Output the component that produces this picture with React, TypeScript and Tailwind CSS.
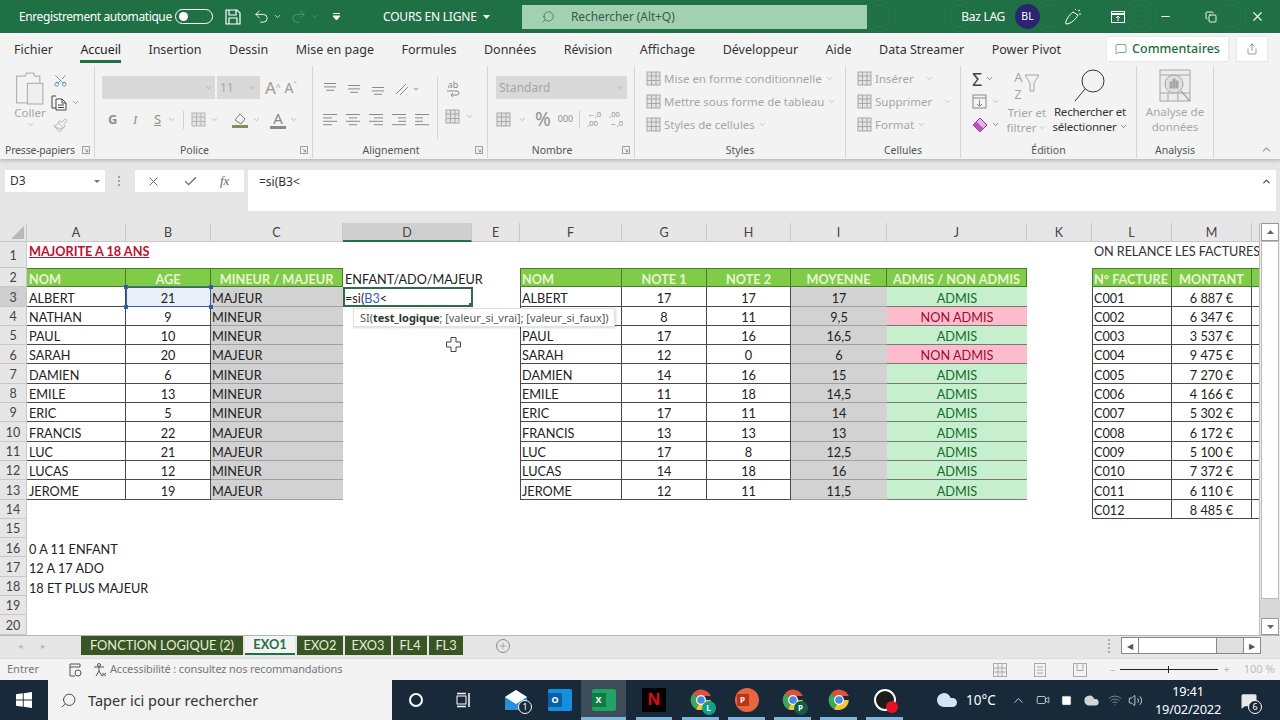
import { ReactNode } from 'react';
import { ChevronDown, ChevronUp, Search, Check, X, MessageSquare, Share, Plus, Minus, Scissors, Paintbrush, Undo2, Redo2, Wifi, Volume2, Cloud, Copy, Square, Video } from 'lucide-react';

const students: [string, number, string][] = [
  ['ALBERT', 21, 'MAJEUR'], ['NATHAN', 9, 'MINEUR'], ['PAUL', 10, 'MINEUR'], ['SARAH', 20, 'MAJEUR'],
  ['DAMIEN', 6, 'MINEUR'], ['EMILE', 13, 'MINEUR'], ['ERIC', 5, 'MINEUR'], ['FRANCIS', 22, 'MAJEUR'],
  ['LUC', 21, 'MAJEUR'], ['LUCAS', 12, 'MINEUR'], ['JEROME', 19, 'MAJEUR'],
];
// F4 sits under the formula tooltip, so its name is left out
const notes: [string, number, number, string, string][] = [
  ['ALBERT', 17, 17, '17', 'ADMIS'], ['', 8, 11, '9,5', 'NON ADMIS'], ['PAUL', 17, 16, '16,5', 'ADMIS'],
  ['SARAH', 12, 0, '6', 'NON ADMIS'], ['DAMIEN', 14, 16, '15', 'ADMIS'], ['EMILE', 11, 18, '14,5', 'ADMIS'],
  ['ERIC', 17, 11, '14', 'ADMIS'], ['FRANCIS', 13, 13, '13', 'ADMIS'], ['LUC', 17, 8, '12,5', 'ADMIS'],
  ['LUCAS', 14, 18, '16', 'ADMIS'], ['JEROME', 12, 11, '11,5', 'ADMIS'],
];
const invoices: [string, string][] = [
  ['C001', '6 887 €'], ['C002', '6 347 €'], ['C003', '3 537 €'], ['C004', '9 475 €'], ['C005', '7 270 €'], ['C006', '4 166 €'],
  ['C007', '5 302 €'], ['C008', '6 172 €'], ['C009', '5 100 €'], ['C010', '7 372 €'], ['C011', '6 110 €'], ['C012', '8 485 €'],
];
const columns = ['A', 'B', 'C', 'D', 'E', 'F', 'G', 'H', 'I', 'J', 'K', 'L', 'M', ''];
const tabs = ['Fichier', 'Accueil', 'Insertion', 'Dessin', 'Mise en page', 'Formules', 'Données', 'Révision', 'Affichage', 'Développeur', 'Aide', 'Data Streamer', 'Power Pivot'];

const ui = "font-['Noto_Sans',sans-serif]";

function Lines({ rows, className = '' }: { rows: [number, number][]; className?: string }) {
  return (
    <svg width="16" height="14" viewBox="0 0 16 14" className={className} stroke="#8a8a8a" strokeWidth="1">
      {rows.map(([a, b], i) => <line key={i} x1={a} x2={b} y1={1.5 + i * 3.4} y2={1.5 + i * 3.4} />)}
    </svg>
  );
}

function Chev({ className = 'text-[#9a9a9a]' }: { className?: string }) {
  return <ChevronDown size={9} strokeWidth={1.5} className={className} />;
}

function TableGlyph({ color = '#a8a8a8' }: { color?: string }) {
  return (
    <svg width="15" height="15" viewBox="0 0 15 15" fill="none" stroke={color} strokeWidth="1">
      <rect x="1" y="1" width="13" height="13" fill="#e4e4e4" />
      <path d="M1 5h13M1 9.500h13M5.500 1v13M10 1v13" />
    </svg>
  );
}

function Group({ label, width, launcher, labelClass = '', children }: { label?: string; width: string; launcher?: boolean; labelClass?: string; children?: ReactNode }) {
  return (
    <div className={`relative flex flex-col my-[1px] border-r border-[#d6d6d6] ${width}`}>
      <div className="flex-1 min-h-0">{children}</div>
      <div className={`h-[18px] pt-[3px] flex items-center justify-center text-[10.500px] text-[#555] ${launcher ? 'pr-[18px]' : ''} ${labelClass}`}>{label}</div>
      {launcher && (
        <svg width="8" height="8" viewBox="0 0 9 9" fill="none" stroke="#8c8c8c" className="absolute right-[4px] bottom-[4px]">
          <path d="M.5 .5h8v8h-8zM3 3l3.500 3.500M6.500 4v2.500H4" />
        </svg>
      )}
    </div>
  );
}

function StyleRow({ label, chevGap = 'ml-[3px]', h = 'h-[23px]' }: { label: string; chevGap?: string; h?: string }) {
  return (
    <div className={`flex items-center gap-[3px] text-[11.500px] text-[#a6a6a6] whitespace-nowrap ${h}`}>
      <TableGlyph />
      <span>{label}</span>
      <Chev className={`text-[#a6a6a6] ${chevGap}`} />
    </div>
  );
}

function Ribbon() {
  return (
    <div className={`flex h-[95px] bg-[#f3f3f3] shadow-[0_2px_3px_rgba(0,0,0,0.18)] relative z-10 ${ui}`}>
      <Group label="Presse-papiers" width="w-[95px]" launcher labelClass="justify-start pl-[5px] pr-0 tracking-[-0.2px]">
        <div className="flex pt-[5px] pl-[14px] gap-[5px]">
          <div className="flex flex-col items-center w-[32px]">
            <svg width="31" height="34" viewBox="0 0 30 33" fill="none" stroke="#b5b5b5" strokeWidth="1.200">
              <path d="M5 5h5l1-3h7l1 3h5v7M5 5H1.500v26H12" />
              <rect x="12" y="12" width="15" height="20" fill="#efefef" />
            </svg>
            <span className="text-[11.500px] text-[#a6a6a6] leading-[14px] mt-[1px]">Coller</span>
            <Chev />
          </div>
          <div className="flex flex-col gap-[6px] pt-[2px]">
            <Scissors size={15} strokeWidth={1.200} className="text-[#4f7aa8] rotate-[-90deg] ml-[2px]" />
            <div className="flex items-center gap-[4px]">
              <svg width="16" height="17" viewBox="0 0 16 17" fill="none" stroke="#444">
                <path d="M5 2H1v12h4" /><path d="M5 5h6l4 4v7H5z" fill="#fafafa" /><path d="M11 5v4h4M7 11h6M7 13.500h6" />
              </svg>
              <Chev className="text-[#555]" />
            </div>
            <Paintbrush size={15} strokeWidth={1.100} className="text-[#9a9a9a] ml-[2px] mt-[1px]" />
          </div>
        </div>
      </Group>
      <Group label="Police" width="w-[218px]" launcher>
        <div className="flex items-center pt-[10px] pl-[7px]">
          <div className="w-[113px] h-[23px] bg-[#d9d9d9] flex items-center justify-end pr-[2px]"><Chev /></div>
          <div className="w-[43px] h-[23px] ml-[2px] bg-[#d9d9d9] flex items-center justify-between px-[3px] text-[12px] text-[#a6a6a6]">11<Chev /></div>
          <span className="ml-[5px] text-[17px] text-[#9a9a9a] leading-none">A<sup className="text-[8px]">^</sup></span>
          <span className="ml-[4px] text-[14px] text-[#9a9a9a] leading-none">A<sup className="text-[8px]">ˇ</sup></span>
        </div>
        <div className="flex items-center pt-[10px] pl-[13px] text-[#8f8f8f] h-[31px]">
          <span className="text-[13px] font-bold w-[25px]">G</span>
          <span className="text-[13px] italic font-['Liberation_Serif',serif] w-[21px]">I</span>
          <span className="text-[13px] underline w-[13px]">S</span>
          <Chev />
          <span className="w-px h-[18px] bg-[#d0d0d0] mx-[7px]" />
          <TableGlyph color="#b5b5b5" />
          <Chev className="text-[#9a9a9a] ml-[4px]" />
          <svg width="18" height="18" viewBox="0 0 18 18" className="ml-[12px]" fill="none" stroke="#7a7a7a">
            <path d="M4 9l5-6 5 5-4 5z" /><rect x="1" y="14" width="16" height="3" fill="#8a8a5a" stroke="none" />
          </svg>
          <Chev className="text-[#9a9a9a] ml-[3px]" />
          <div className="ml-[9px] flex flex-col items-center leading-none text-[15px] text-[#8a8a8a]">A<span className="w-[16px] h-[3px] bg-[#8a8a8a]" /></div>
          <Chev className="text-[#9a9a9a] ml-[3px]" />
        </div>
      </Group>
      <Group label="Alignement" width="w-[175px]" launcher>
        <div className="flex pt-[12px] pl-[9px]">
          <div className="flex flex-col gap-[13px]">
            <div className="flex items-center gap-[8px]">
              <Lines rows={[[2, 14], [2, 14], [4, 12]]} />
              <Lines className="mt-[4px]" rows={[[2, 14], [2, 14], [4, 12]]} />
              <Lines className="mt-[8px]" rows={[[2, 14], [2, 14], [4, 12]]} />
              <svg width="24" height="14" viewBox="0 0 24 14" fill="none" stroke="#8a8a8a"><path d="M2 12L12 2M6 13l8-8" /><path d="M20 6l2 2 2-2" /></svg>
            </div>
            <div className="flex items-center gap-[7px]">
              <Lines rows={[[1, 15], [1, 10], [1, 15], [1, 10]]} />
              <Lines rows={[[1, 15], [4, 12], [1, 15], [4, 12]]} />
              <Lines rows={[[1, 15], [6, 15], [1, 15], [6, 15]]} />
              <Lines rows={[[1, 15], [7, 15], [7, 15], [1, 15]]} />
              <Lines rows={[[1, 15], [1, 9], [1, 9], [1, 15]]} />
            </div>
          </div>
          <div className="ml-[7px] pl-[7px] border-l border-[#d6d6d6] h-[62px] flex flex-col gap-[10px] -mt-[1px] text-[#8a8a8a]">
            <div className="text-[9px] leading-[11px] w-[16px] text-center mt-[2px]">
              <div>ab</div>
              <svg width="14" height="9" viewBox="0 0 14 9" fill="none" stroke="#8a8a8a" className="mx-auto"><path d="M1 1h10q2 0 2 2t-2 2H5M7 3L5 5l2 2" /></svg>
            </div>
            <div className="flex items-center gap-[5px]"><TableGlyph /><Chev /></div>
          </div>
        </div>
      </Group>
      <Group label="Nombre" width="w-[147px]" launcher>
        <div className="pt-[10px] pl-[8px]">
          <div className="w-[131px] h-[23px] bg-[#d9d9d9] flex items-center justify-between px-[3px] text-[12px] text-[#a6a6a6]">Standard<Chev /></div>
          <div className="flex items-center mt-[8px] text-[#8f8f8f] h-[24px]">
            <TableGlyph />
            <Chev className="text-[#9a9a9a] ml-[7px]" />
            <span className="ml-[8px] text-[19px] leading-none">%</span>
            <span className="ml-[7px] text-[9px]">000</span>
            <span className="w-px h-[18px] bg-[#d0d0d0] ml-[6px] mr-[7px]" />
            <span className="text-[7.500px] leading-[9px] w-[15px]">←,0<br />,00</span>
            <span className="text-[7.500px] leading-[9px] w-[15px] ml-[7px]">,00<br />→,0</span>
          </div>
        </div>
      </Group>
      <Group label="Styles" width="w-[211px]">
        <div className="pt-[1px] pl-[11px]">
          <StyleRow label="Mise en forme conditionnelle" chevGap="" />
          <StyleRow label="Mettre sous forme de tableau" chevGap="" />
          <StyleRow label="Styles de cellules" chevGap="" />
        </div>
      </Group>
      <Group label="Cellules" width="w-[115px]">
        <div className="pt-[1px] pl-[11px]">
          <StyleRow label="Insérer" chevGap="ml-[8px]" />
          <StyleRow label="Supprimer" chevGap="ml-[8px]" />
          <StyleRow label="Format" chevGap="" />
        </div>
      </Group>
      <Group label="Édition" width="w-[176px]">
        <div className="flex pt-[1px] pl-[11px]">
          <div className="w-[34px] flex flex-col">
            <div className="h-[23px] flex items-center gap-[3px] text-[#444]"><span className="text-[18px] leading-none">Σ</span><Chev className="text-[#444]" /></div>
            <div className="h-[23px] flex items-center gap-[4px]">
              <svg width="15" height="15" viewBox="0 0 15 15" fill="none" stroke="#8a8a8a"><rect x="1" y="1" width="13" height="13" /><path d="M1 4h13M7.500 6v6M5 10l2.500 2.500L10 10" /></svg>
              <Chev />
            </div>
            <div className="h-[23px] flex items-center gap-[3px]">
              <svg width="16" height="16" viewBox="0 0 16 16"><path d="M8 1l7 7-7 7-7-7z" fill="#e6b3e6" stroke="#8a3a8a" /><path d="M1 8l3.500-3.500 7 7L8 15z" fill="#c04fc0" /></svg>
              <Chev className="text-[#444]" />
            </div>
          </div>
          <div className="w-[42px] flex flex-col items-center text-[11.500px] leading-[15px] text-[#a6a6a6]">
            <div className="h-[36px] mt-[1px] flex items-center gap-[1px]">
              <div className="flex flex-col text-[13px] leading-[17px]"><span>A</span><span>Z</span></div>
              <svg width="16" height="18" viewBox="0 0 16 18" fill="none" stroke="#a6a6a6" className="mb-[6px]"><path d="M1 1h14l-5 8v8H6V9z" /></svg>
            </div>
            <span className="mt-[1px]">Trier et</span>
            <span className="flex items-center gap-[2px]">filtrer<Chev className="text-[#a6a6a6]" /></span>
          </div>
          <div className="w-[80px] ml-[2px] flex flex-col items-center text-[11.500px] leading-[15px] text-[#333] whitespace-nowrap tracking-[-0.2px]">
            <svg width="34" height="36" viewBox="0 0 34 36" fill="none" stroke="#333" strokeWidth="1">
              <circle cx="20" cy="14" r="11" /><path d="M12 22L2 34" />
            </svg>
            <span className="mt-[1px]">Rechercher et</span>
            <span className="flex items-center gap-[2px]">sélectionner<Chev className="text-[#333]" /></span>
          </div>
        </div>
      </Group>
      <Group label="Analysis" width="w-[77px]">
        <div className="flex flex-col items-center pt-[3px] text-[11.500px] leading-[15px] text-[#a6a6a6]">
          <svg width="32" height="34" viewBox="0 0 32 34" fill="none" stroke="#a6a6a6">
            <rect x="1" y="1" width="30" height="31" fill="#ececec" /><path d="M1 6h30M1 24h30M9 24v8M19 24v8" />
            <circle cx="15" cy="15" r="9" fill="#e0e0e0" /><path d="M22 22l9 10" strokeWidth="1.500" /><rect x="11" y="13" width="2" height="6" fill="#a6a6a6" /><rect x="14" y="10" width="2" height="9" fill="#a6a6a6" /><rect x="17" y="12" width="2" height="7" fill="#a6a6a6" />
          </svg>
          <span className="mt-[1px]">Analyse de</span>
          <span>données</span>
        </div>
      </Group>
      <div className="flex-1 flex items-end justify-end pb-[3px] pr-[7px]">
        <ChevronUp size={13} strokeWidth={1.500} className="text-[#444]" />
      </div>
    </div>
  );
}

function TitleBar() {
  return (
    <div className={`relative h-[33px] bg-[#1f7145] text-white flex items-center shrink-0 overflow-hidden ${ui}`}>
      <svg width="420" height="33" viewBox="0 0 420 33" fill="none" stroke="#26784b" strokeWidth="1" className="absolute right-[10px] top-0">
        {[30, 110, 200, 290, 380].map(x => (
          <g key={x}>
            <circle cx={x} cy="16" r="6" /><circle cx={x} cy="16" r="11" /><circle cx={x} cy="16" r="16" />
          </g>
        ))}
      </svg>
      <span className="relative ml-[19px] w-[153px] text-[12px] whitespace-nowrap tracking-[-0.4px]">Enregistrement automatique</span>
      <div className="relative ml-[3px] w-[38px] h-[15px] rounded-full border border-white flex items-center pl-[3px]">
        <span className="w-[9px] h-[9px] rounded-full bg-white" />
      </div>
      <svg width="16" height="16" viewBox="0 0 16 16" fill="none" stroke="#fff" strokeWidth="1.200" className="relative ml-[12px]">
        <path d="M1 1h11l3 3v11H1zM4 1v5h7V1M4 15V9h8v6" />
      </svg>
      <Undo2 size={17} strokeWidth={1.300} className="relative ml-[12px]" />
      <ChevronDown size={9} className="relative ml-[3px]" />
      <Redo2 size={17} strokeWidth={1.300} className="relative ml-[8px] text-[#4f9a70]" />
      <ChevronDown size={9} className="relative ml-[3px] text-[#4f9a70]" />
      <svg width="9" height="10" viewBox="0 0 9 10" fill="none" stroke="#fff" className="relative ml-[13px]"><path d="M1 1.500h7" /><path d="M1 4l3.500 4L8 4z" fill="#fff" /></svg>
      <span className="relative ml-[42px] text-[12px] whitespace-nowrap tracking-[-0.2px]">COURS EN LIGNE</span>
      <svg width="7" height="4" viewBox="0 0 7 4" className="relative ml-[6px]"><path d="M0 0h7L3.500 4z" fill="#fff" /></svg>
      <div className="absolute left-[522px] top-[5px] w-[345px] h-[24px] bg-[#a2d1b2] flex items-center text-[#3d5a48] text-[12px]">
        <Search size={14} strokeWidth={1.200} className="ml-[19px] -scale-x-100" />
        <span className="ml-[16px] tracking-[-0.1px]">Rechercher (Alt+Q)</span>
      </div>
      <div className="ml-auto flex items-center">
        <span className="relative text-[12px] whitespace-nowrap tracking-[-0.3px]">Baz LAG</span>
        <div className="relative ml-[10px] w-[25px] h-[25px] rounded-full bg-[#2b2470] flex items-center justify-center text-[10.500px]">BL</div>
        <svg width="18" height="18" viewBox="0 0 18 18" fill="none" stroke="#fff" className="relative ml-[24px]"><path d="M2 16c-1-3 3-9 7-12l5 3c-2 4-7 9-12 9zM11 2l1-1M14 3l2-1M15 6h2" /></svg>
        <svg width="14" height="12" viewBox="0 0 14 12" fill="none" stroke="#fff" className="relative ml-[29px]"><rect x=".5" y=".5" width="13" height="11" /><path d="M.5 3h13" strokeWidth="2" /><path d="M7 10V5M5 7l2-2 2 2" /></svg>
        <Minus size={13} strokeWidth={1.800} className="relative ml-[34px]" />
        <Copy size={12} strokeWidth={1.800} className="relative ml-[33px]" />
        <X size={15} strokeWidth={1.800} className="relative ml-[33px] mr-[15px]" />
      </div>
    </div>
  );
}

function TabBar() {
  return (
    <div className={`h-[32px] bg-[#f3f3f3] flex items-center shrink-0 text-[12.500px] text-[#333] ${ui}`}>
      <div className="flex items-center gap-[27.500px] ml-[14px] w-[1093px] pt-[2px]">
        {tabs.map(t => (
          <span key={t} className={`relative whitespace-nowrap ${t === 'Accueil' ? 'text-[#222] tracking-[-0.1px]' : ''}`}>
            {t}
            {t === 'Accueil' && <span className="absolute left-0 right-0 -bottom-[4px] h-[3px] bg-[#1f7145]" />}
          </span>
        ))}
      </div>
      <div className="w-[121px] h-[24px] bg-white flex items-center justify-center gap-[5px] text-[#1f6b44] font-medium shadow-[0_0_2px_rgba(0,0,0,0.12)]">
        <MessageSquare size={12} strokeWidth={1.200} />Commentaires
      </div>
      <div className="ml-[9px] w-[30px] h-[24px] bg-white flex items-center justify-center text-[#1f7145] shadow-[0_0_2px_rgba(0,0,0,0.12)]">
        <Share size={12} strokeWidth={1.200} />
      </div>
    </div>
  );
}

function FormulaZone() {
  return (
    <div className={`h-[64px] bg-[#e6e6e6] flex items-start pt-[11px] pl-[5px] shrink-0 ${ui}`}>
      <div className="w-[100px] h-[22px] bg-white flex items-center justify-between pl-[5px] pr-[5px] text-[12px] text-[#333]">
        D3
        <svg width="6" height="3" viewBox="0 0 6 3"><path d="M0 0h6L3 3z" fill="#777" /></svg>
      </div>
      <div className="w-[3px] h-[10px] ml-[13px] mt-[6px] border-l-2 border-dotted border-[#a0a0a0]" />
      <div className="ml-[14px] w-[109px] h-[22px] bg-white flex items-center pl-[11px] text-[#666]">
        <X size={15} strokeWidth={1.500} />
        <Check size={15} strokeWidth={2} className="ml-[22px]" />
        <span className="ml-[22px] text-[13px] italic font-['Liberation_Serif',serif]">fx</span>
      </div>
      <div className="ml-[4px] w-[1028px] h-[41px] bg-white pl-[11px] pr-[4px] pt-[3px] text-[12px] text-[#333] flex items-start justify-between">
        =si(B3&lt;
        <ChevronUp size={11} strokeWidth={2.500} className="text-[#444] mt-[3px]" />
      </div>
    </div>
  );
}

const bd = 'border-r border-b border-[#4a4a4a]';
const bdL = 'border-l border-r border-b border-[#4a4a4a]';
const grayCell = 'bg-[#d2d2d2] border-b border-[#a0a0a0]';
const greenHead = 'bg-[#80cc48] text-[#e8f5d6] font-bold border-t border-r border-b border-[#4a7a30]';

function Cell({ className = '', children }: { className?: string; children?: ReactNode }) {
  return <div className={`min-w-0 whitespace-nowrap flex items-center pt-[3px] ${className}`}>{children}</div>;
}

function RowHead({ n, active }: { n: number; active?: boolean }) {
  return (
    <div className={`flex items-center justify-center pt-[3px] border-b border-r border-[#c8c8c8] text-[12.500px] leading-none text-[#444] ${active ? 'bg-[#cfcfcf]' : 'bg-[#e6e6e6]'}`}>{n}</div>
  );
}

function Sheet() {
  const rowCells = (r: number) => {
    const s = students[r - 3];
    const n = notes[r - 3];
    const inv = invoices[r - 3];
    const hasS = r >= 3 && r <= 13;
    return (
      <>
        {hasS ? (
          <>
            <Cell className={`${bd} pl-[2px]`}>{s[0]}</Cell>
            <Cell className={`${bd} justify-center ${r === 3 ? 'bg-[#e8eff9]' : ''}`}>{s[1]}</Cell>
            <Cell className={`${grayCell} pl-[1px]`}>{s[2]}</Cell>
          </>
        ) : (
          <>
            <Cell className="pl-[2px] overflow-visible">
              {r === 16 && '0 A 11 ENFANT'}
              {r === 17 && '12 A 17 ADO'}
              {r === 18 && '18 ET PLUS MAJEUR'}
            </Cell>
            <Cell />
            <Cell />
          </>
        )}
        <Cell className="pl-[2px]">{r === 3 && <span>=si(<span className="text-[#2f5fa8]">B3</span>&lt;</span>}</Cell>
        <Cell />
        {hasS ? (
          <>
            <Cell className={`${bdL} pl-[1px]`}>{n[0]}</Cell>
            <Cell className={`${bd} justify-center`}>{n[1]}</Cell>
            <Cell className={`${bd} justify-center`}>{n[2]}</Cell>
            <Cell className={`${grayCell} justify-center`}>{n[3]}</Cell>
            <Cell className={`border-b border-[#777] justify-center ${n[4] === 'ADMIS' ? 'bg-[#c6efce] text-[#146b2a]' : 'bg-[#fcbccb] text-[#9c0a36]'}`}>{n[4]}</Cell>
          </>
        ) : (
          <><Cell /><Cell /><Cell /><Cell /><Cell /></>
        )}
        <Cell />
        {inv ? (
          <>
            <Cell className={`${bdL} pl-[1px]`}>{inv[0]}</Cell>
            <Cell className={`${bd} justify-center`}>{inv[1]}</Cell>
            <Cell className={bd} />
          </>
        ) : (
          <><Cell /><Cell /><Cell /></>
        )}
      </>
    );
  };

  return (
    <div className="relative flex h-[412px] shrink-0 bg-white overflow-hidden">
      <div className="relative w-[1260px] overflow-hidden border-r border-[#bdbdbd] grid grid-cols-[27px_99px_85px_132px_129px_48px_102px_85px_84px_96px_140px_65px_80px_80px_8px] grid-rows-[19px_26px_repeat(19,19.300px)] text-[12.700px] leading-none text-[#222] font-['Lato',sans-serif]">
        {/* column headers */}
        <div className="bg-[#e6e6e6] border-b border-r border-[#c8c8c8] flex items-end justify-end p-[2px]">
          <svg width="13" height="13" viewBox="0 0 13 13"><path d="M13 0v13H0z" fill="#b8b8b8" /></svg>
        </div>
        {columns.map((c, i) => (
          <div key={i} className={`flex items-center justify-center pt-[3px] text-[12.500px] leading-none text-[#444] border-r border-[#c8c8c8] ${c === 'D' ? 'bg-[#cfcfcf] border-b-2 border-b-[#217346]' : 'bg-[#e6e6e6] border-b border-b-[#c8c8c8]'}`}>{c}</div>
        ))}

        {/* row 1 */}
        <RowHead n={1} />
        <Cell className="pl-[2px] pb-[10px] font-bold text-[#c00f2f] underline">MAJORITE A 18 ANS</Cell>
        <Cell /><Cell /><Cell /><Cell /><Cell /><Cell /><Cell /><Cell /><Cell /><Cell />
        <Cell className="pl-[2px] pb-[10px] text-[#333] tracking-[-0.1px]">ON RELANCE LES FACTURES</Cell>
        <Cell /><Cell />

        {/* row 2 */}
        <RowHead n={2} />
        <Cell className={`${greenHead} pl-[2px]`}>NOM</Cell>
        <Cell className={`${greenHead} justify-center`}>AGE</Cell>
        <Cell className={`${greenHead} justify-center`}>MINEUR / MAJEUR</Cell>
        <Cell className="pl-[2px]">ENFANT/ADO/MAJEUR</Cell>
        <Cell />
        <Cell className={`${greenHead} pl-[1px] border-l`}>NOM</Cell>
        <Cell className={`${greenHead} justify-center`}>NOTE 1</Cell>
        <Cell className={`${greenHead} justify-center`}>NOTE 2</Cell>
        <Cell className={`${greenHead} justify-center`}>MOYENNE</Cell>
        <Cell className={`${greenHead} justify-center`}>ADMIS / NON ADMIS</Cell>
        <Cell />
        <Cell className={`${greenHead} pl-[1px] border-l`}>N° FACTURE</Cell>
        <Cell className={`${greenHead} justify-center`}>MONTANT</Cell>
        <Cell className={greenHead} />

        {Array.from({ length: 18 }, (_, i) => i + 3).map(r => (
          <div key={r} className="contents">
            <RowHead n={r} active={r === 3} />
            {rowCells(r)}
          </div>
        ))}

        {/* selected cell and its reference, over the grid */}
        <div className="absolute left-[343px] top-[64px] w-[130px] h-[20px] border-2 border-[#2e6b46]">
          <span className="absolute -right-[2px] -bottom-[2px] w-[4px] h-[4px] bg-[#2e6b46]" />
        </div>
        <div className="absolute left-[126px] top-[64px] w-[85px] h-[20px] border-[1.500px] border-[#2f5fa8]">
          <span className="absolute -left-[3px] -top-[3px] w-[4px] h-[4px] bg-[#2f5fa8]" />
          <span className="absolute -right-[3px] -top-[3px] w-[4px] h-[4px] bg-[#2f5fa8]" />
          <span className="absolute -left-[3px] -bottom-[3px] w-[4px] h-[4px] bg-[#2f5fa8]" />
          <span className="absolute -right-[3px] -bottom-[3px] w-[4px] h-[4px] bg-[#2f5fa8]" />
        </div>
        <div className="absolute left-[353px] top-[85px] w-[262px] h-[19px] bg-white border border-[#e0e0e0] shadow-[1px_1px_2px_rgba(0,0,0,0.15)] flex items-center pl-[6px] text-[11px] text-[#555] font-['Noto_Sans',sans-serif] whitespace-nowrap tracking-[-0.05px]">
          SI(<b className="text-[#333]">test_logique</b>; [valeur_si_vrai]; [valeur_si_faux])
        </div>
        <svg width="15" height="15" viewBox="0 0 15 15" className="absolute left-[446px] top-[114px]" fill="#fff" stroke="#444" strokeWidth="1">
          <path d="M5 .5h5v4.500h4.500v5H10v4.500H5V10H.5V5H5z" />
        </svg>
      </div>
      <div className="w-[20px] flex flex-col bg-[#ededed]">
        <div className="h-[18px] mx-[1px] bg-white border border-[#999] flex items-center justify-center">
          <svg width="7" height="4" viewBox="0 0 7 4"><path d="M0 4h7L3.500 0z" fill="#666" /></svg>
        </div>
        <div className="h-[358px] mx-[1px] bg-white border border-[#bbb]" />
        <div className="flex-1 bg-[#d8d8d8]" />
        <div className="h-[17px] mx-[1px] bg-white border border-[#999] flex items-center justify-center">
          <svg width="7" height="4" viewBox="0 0 7 4"><path d="M0 0h7L3.500 4z" fill="#666" /></svg>
        </div>
      </div>
    </div>
  );
}

const sheetTabs: [string, string][] = [
  ['FONCTION LOGIQUE (2)', 'w-[162px]'], ['EXO1', 'w-[50px]'], ['EXO2', 'w-[46px]'], ['EXO3', 'w-[46px]'], ['FL4', 'w-[34px]'], ['FL3', 'w-[34px]'],
];

function SheetTabs() {
  return (
    <div className="h-[23px] bg-[#e6e6e6] border-t border-[#b5b5b5] pb-[3px] flex items-center shrink-0 font-['Lato',sans-serif] text-[12.800px]">
      <span className="ml-[18px] text-[#bdbdbd] text-[9px]">◂</span>
      <span className="ml-[18px] text-[#bdbdbd] text-[9px]">▸</span>
      <div className="ml-[35px] flex items-center gap-[2px] w-[404px]">
        {sheetTabs.map(([t, w]) => (
          <div key={t} className={`${w} h-[19px] flex items-center justify-center ${t === 'EXO1' ? 'bg-[#f3f3f3] text-[#1f7145] font-bold border-b-2 border-[#1f7145]' : 'bg-[#375623] text-[#e4ecd8]'}`}>{t}</div>
        ))}
      </div>
      <div className="ml-[11px] w-[14px] h-[14px] rounded-full border border-[#888] flex items-center justify-center text-[#777]"><Plus size={10} strokeWidth={1.200} /></div>
      <div className="ml-[598px] w-[2px] h-[14px] border-l-2 border-dotted border-[#aaa]" />
      <div className="ml-[11px] w-[140px] h-[17px] border border-[#888] flex bg-[#e0e0e0]">
        <div className="w-[17px] bg-white border-r border-[#888] flex items-center justify-center text-[8px] text-[#555]">◀</div>
        <div className="w-[78px] bg-white border-r border-[#888]" />
        <div className="flex-1" />
        <div className="w-[17px] bg-white border-l border-[#888] flex items-center justify-center text-[8px] text-[#555]">▶</div>
      </div>
    </div>
  );
}

function StatusBar() {
  return (
    <div className={`h-[22px] bg-[#f3f3f3] border-t border-[#dcdcdc] flex items-center shrink-0 text-[11px] text-[#777] ${ui}`}>
      <span className="ml-[7px]">Entrer</span>
      <svg width="14" height="14" viewBox="0 0 14 14" fill="none" stroke="#555" className="ml-[29px]"><path d="M2 1h10v3H2zM2 4v9h5" /><circle cx="10" cy="10" r="3" /></svg>
      <svg width="14" height="14" viewBox="0 0 14 14" fill="none" stroke="#555" className="ml-[11px]"><circle cx="6" cy="2" r="1.500" /><path d="M1 4h10M6 4v4l-3 5M6 8l3 5" /><path d="M9 10l4 3M13 10l-4 3" /></svg>
      <span className="ml-[3px] tracking-[-0.15px] w-[270px] whitespace-nowrap">Accessibilité : consultez nos recommandations</span>
      <div className="ml-[613px] flex items-center gap-[26px]">
        <svg width="14" height="14" viewBox="0 0 14 14" fill="none" stroke="#a8a8a8"><rect x=".5" y=".5" width="13" height="13" /><path d="M.5 5h13M.5 9h13M5 .5v13M9 .5v13" /></svg>
        <svg width="14" height="14" viewBox="0 0 14 14" fill="none" stroke="#a8a8a8"><rect x="1.500" y=".5" width="11" height="13" /><path d="M4 4h6M4 7h6M4 10h6" /></svg>
        <svg width="14" height="14" viewBox="0 0 14 14" fill="none" stroke="#a8a8a8"><rect x=".5" y=".5" width="13" height="13" /><path d="M4 .5v7h6v-7" /></svg>
      </div>
      <span className="ml-[23px] text-[#bbb]">–</span>
      <div className="relative ml-[5px] w-[98px] h-px bg-[#222]">
        <span className="absolute left-[48px] -top-[3px] w-px h-[7px] bg-[#222]" />
      </div>
      <span className="ml-[5px] text-[#bbb]">+</span>
      <span className="ml-[14px] text-[#bbb] whitespace-nowrap">100 %</span>
    </div>
  );
}

function ChromeIcon({ badge, badgeColor }: { badge?: string; badgeColor?: string }) {
  return (
    <div className="relative w-[22px] h-[22px]">
      <svg width="22" height="22" viewBox="0 0 22 22">
        <path d="M11 11L3 4.500A10.500 10.500 0 0 1 20.800 7H11z" fill="#e0503f" />
        <path d="M11 11l-5 9.200A10.500 10.500 0 0 1 3 4.500z" fill="#3fa75a" />
        <path d="M11 11h9.800A10.500 10.500 0 0 1 6 20.200z" fill="#f2c53d" />
        <circle cx="11" cy="11" r="5" fill="#fff" /><circle cx="11" cy="11" r="3.800" fill="#4a89e0" />
      </svg>
      {badge && (
        <span className={`absolute -right-[4px] -bottom-[4px] w-[14px] h-[14px] rounded-full flex items-center justify-center text-[8px] font-bold text-white ${badgeColor}`}>{badge}</span>
      )}
    </div>
  );
}

function Slot({ w, open, active, children }: { w: string; open?: boolean; active?: boolean; children?: ReactNode }) {
  return (
    <div className={`relative h-[40px] flex items-center justify-center ${w} ${active ? 'bg-[#3c4c58]' : ''}`}>
      {children}
      {open && <span className="absolute left-0 right-0 bottom-0 h-[3px] bg-[#7fb4dc]" />}
    </div>
  );
}

function Taskbar() {
  return (
    <div className={`h-[40px] bg-[#18293a] flex items-center shrink-0 text-white ${ui}`}>
      <div className="w-[48px] h-[40px] flex items-center justify-center">
        <svg width="16" height="16" viewBox="0 0 16 16" fill="#fff"><path d="M0 2.300l6.800-1v6.300H0zM7.700 1.200L16 0v7.600H7.700zM0 8.400h6.800v6.400L0 13.800zM7.700 8.400H16V16l-8.300-1.200z" /></svg>
      </div>
      <div className="w-[344px] h-[40px] bg-[#f2f2f2] flex items-center text-[#333]">
        <Search size={17} strokeWidth={1.200} className="ml-[12px] -scale-x-100" />
        <span className="ml-[11px] pt-[2px] text-[14.500px]">Taper ici pour rechercher</span>
      </div>
      <Slot w="w-[48px]"><span className="w-[14px] h-[14px] rounded-full border-2 border-white" /></Slot>
      <Slot w="w-[46px]">
        <svg width="16" height="16" viewBox="0 0 16 16" fill="none" stroke="#fff"><rect x="2" y="4" width="9" height="8" /><path d="M2 1.500h9M2 14.500h9M14 1v14" strokeWidth="1.500" /></svg>
      </Slot>
      <div className="w-[7px]" />
      <Slot w="w-[46px]">
        <div className="relative">
          <svg width="24" height="22" viewBox="0 0 24 22"><path d="M1 8l11-7 11 7v13H1z" fill="#2a8fd8" /><path d="M1 8l11 7 11-7-11-7z" fill="#fff" /></svg>
          <span className="absolute -right-[4px] -bottom-[3px] w-[14px] h-[14px] rounded-full bg-[#18293a] border border-white flex items-center justify-center text-[9px]">1</span>
        </div>
      </Slot>
      <Slot w="w-[42px]">
        <div className="relative w-[24px] h-[22px] bg-[#1490df] rounded-[2px]">
          <span className="absolute left-0 top-[4px] w-[14px] h-[14px] bg-[#0a5ea8] flex items-center justify-center text-[9px] font-bold">O</span>
        </div>
      </Slot>
      <Slot w="w-[45px]" active open>
        <div className="relative w-[24px] h-[22px] bg-[#21a366] rounded-[2px]">
          <span className="absolute left-0 top-[4px] w-[14px] h-[14px] bg-[#107c41] flex items-center justify-center text-[9px] font-bold">X</span>
        </div>
      </Slot>
      <div className="w-[10px]" />
      <Slot w="w-[36px]" open>
        <div className="w-[24px] h-[24px] bg-black flex items-center justify-center text-[#e50914] font-bold text-[17px] font-['Liberation_Sans',sans-serif]">N</div>
      </Slot>
      <div className="w-[10px]" />
      <Slot w="w-[37px]" open><ChromeIcon badge="L" badgeColor="bg-[#12a08c]" /></Slot>
      <div className="w-[9px]" />
      <Slot w="w-[37px]" open>
        <div className="w-[24px] h-[24px] rounded-full bg-[#e8663f] flex items-center pl-[2px]">
          <span className="w-[12px] h-[12px] bg-[#b7361a] flex items-center justify-center text-[8px] font-bold">P</span>
        </div>
      </Slot>
      <div className="w-[9px]" />
      <Slot w="w-[37px]" open><ChromeIcon badge="P" badgeColor="bg-[#0f5f45]" /></Slot>
      <div className="w-[9px]" />
      <Slot w="w-[37px]" open><ChromeIcon /></Slot>
      <div className="w-[9px]" />
      <Slot w="w-[37px]" open>
        <div className="relative w-[22px] h-[22px] rounded-full border-2 border-white bg-[#1c1c1c]">
          <span className="absolute -right-[4px] -bottom-[4px] w-[12px] h-[12px] rounded-full bg-[#e81123]" />
        </div>
      </Slot>
      <Cloud size={24} fill="#cfe4f5" strokeWidth={0} className="ml-[32px]" />
      <span className="ml-[7px] w-[36px] text-[13.500px] whitespace-nowrap">10°C</span>
      <ChevronUp size={15} strokeWidth={1.200} className="ml-[9px]" />
      <Video size={14} strokeWidth={1.200} className="ml-[10px]" />
      <Square size={11} fill="#fff" strokeWidth={1} className="ml-[11px]" />
      <Cloud size={17} fill="#d5d5d5" strokeWidth={0} className="ml-[11px]" />
      <Wifi size={14} strokeWidth={1.200} className="ml-[8px] text-[#aaa]" />
      <Volume2 size={15} strokeWidth={1.200} className="ml-[6px]" />
      <div className="ml-[10px] w-[70px] flex flex-col items-center text-[12.800px] leading-[18px] tracking-[-0.2px]">
        <span>19:41</span>
        <span className="whitespace-nowrap">19/02/2022</span>
      </div>
      <div className="relative ml-[17px] w-[16px] h-[16px]">
        <MessageSquare size={18} fill="#e8e8e8" strokeWidth={0} />
        <span className="absolute -right-[6px] -bottom-[6px] w-[14px] h-[14px] rounded-full bg-[#18293a] border border-white flex items-center justify-center text-[9px]">6</span>
      </div>
    </div>
  );
}

export default function App() {
  return (
    <div className="w-[1280px] h-[720px] flex flex-col overflow-hidden bg-white">
      <TitleBar />
      <TabBar />
      <Ribbon />
      <FormulaZone />
      <Sheet />
      <SheetTabs />
      <StatusBar />
      <Taskbar />
    </div>
  );
}
